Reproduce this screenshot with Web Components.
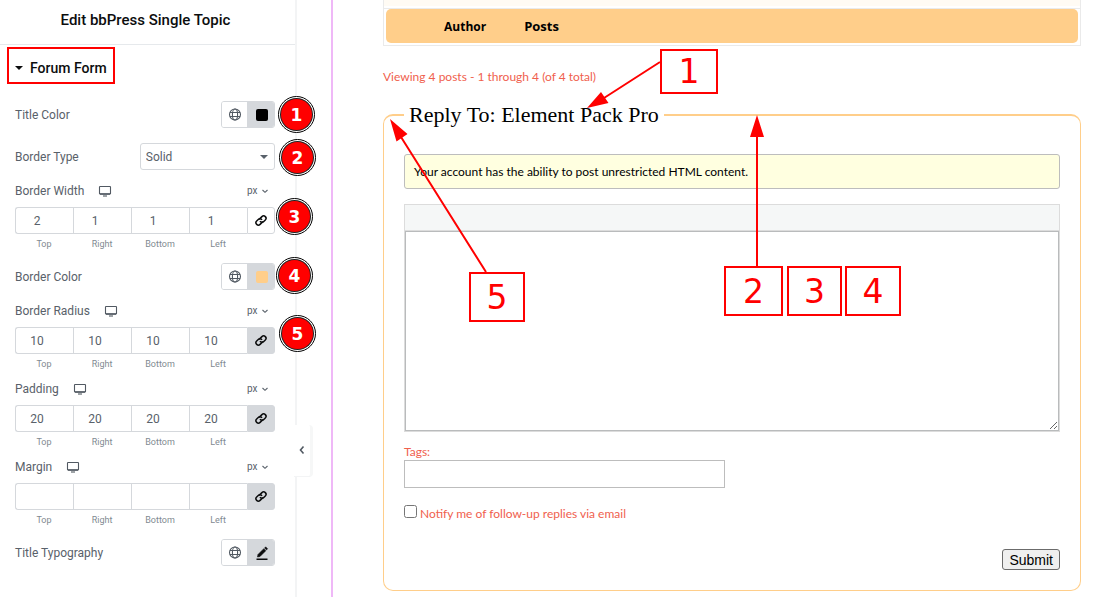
<!DOCTYPE html>
<html lang="en">
<head>
<meta charset="utf-8">
<title>Edit bbPress Single Topic</title>
<style>
  html, body { margin: 0; background: #fff; }
  body { font-family: Roboto, "Liberation Sans", sans-serif; color: #59616a; }
</style>
</head>
<body>
<editor-app></editor-app>
<script>
const define = (name, html, setup) => {
  const template = document.createElement('template');
  template.innerHTML = '<style>*{box-sizing:border-box}:host{display:block}</style>' + html;
  customElements.define(name, class extends HTMLElement {
    constructor() {
      super();
      this.attachShadow({ mode: 'open' }).append(template.content.cloneNode(true));
    }
    connectedCallback() { if (setup) setup(this, this.shadowRoot); }
  });
};

const ICONS = {
  globe: '<circle cx="8" cy="7.500" r="5.5"/><ellipse cx="8" cy="7.500" rx="2.6" ry="5.5"/><path d="M3 5.500h10M3 9.500h10"/>',
  desktop: '<rect x="2.5" y="3.5" width="11" height="7.5" rx="0.6"/><path d="M3 11h10" stroke-width="1.500"/><path d="M6 13h4"/>',
  chevron: '<path d="M5.5 7l2.5 2.3L10.500 7"/>',
  left: '<path d="M9.500 3.500L6.500 7l3 3.500" stroke-width="1.600"/>',
  link: '<g transform="rotate(-45 8 7.500)" stroke-width="1.500"><path d="M8.500 9.600H4.600a2.400 2.400 0 0 1 0-4.800h2.200a2.400 2.400 0 0 1 2.300 3"/><path d="M7.500 5.400h3.900a2.400 2.400 0 0 1 0 4.800H9.200a2.400 2.400 0 0 1-2.300-3"/></g>',
  pencil: '<path d="M4 9.500L9.800 3.700l2 2L6 11.500l-2.500.5z" fill="currentColor" stroke-width=".6"/><path d="M10.500 3l1.200-1.200 2 2L12.500 5z" fill="currentColor" stroke-width=".4"/><path d="M2.500 14.300h11" stroke-width="1.400"/>',
  caret: '<path d="M4 6h8l-4 4z" fill="currentColor" stroke="none"/>'
};

define('ui-icon', `
  <style>:host{display:block;width:16px;height:16px;flex:none} svg{display:block;width:100%;height:100%}</style>
  <svg viewBox="0 0 16 16" fill="none" stroke="currentColor" stroke-width="1.100" aria-hidden="true"></svg>`,
  (el, root) => { root.querySelector('svg').innerHTML = ICONS[el.getAttribute('name')]; });

define('panel-row', `
  <style>
    :host{display:flex;justify-content:space-between;align-items:center;padding:2px 0 1px;font-size:12px}
  </style><span><slot name="label"></slot></span><slot></slot>`);

define('value-buttons', `
  <style>
    :host{display:flex;width:54px;height:27px;border:1px solid #d5d8dc;border-radius:3px;overflow:hidden}
    button{flex:1;border:0;padding:0;margin:0;background:#fff;color:#515962;display:grid;place-items:center}
    .value{background:#d5d8dc;color:#0c0d0e;padding-left:2px}
    ::slotted(i){display:block;width:12px;height:12px;border-radius:2px}
  </style>
  <button aria-label="Global value"><ui-icon name="globe"></ui-icon></button>
  <button class="value" aria-label="Custom value"><slot></slot></button>`);

define('border-type', `
  <style>
    :host{display:flex;justify-content:space-between;align-items:center;padding:2px 0 1px;font-size:12px}
    .box{display:grid;align-items:center;width:52%;height:27px}
    select,ui-icon{grid-area:1/1}
    select{appearance:none;width:100%;height:27px;border:1px solid #d5d8dc;border-radius:3px;background:#fff;
      padding:0 5px;font:12px Roboto,sans-serif;color:inherit}
    ui-icon{justify-self:end;margin-right:3px;pointer-events:none}
  </style>
  <label for="type">Border Type</label>
  <div class="box"><select id="type"><option>Solid</option><option>Dashed</option></select><ui-icon name="caret"></ui-icon></div>`);

define('dimension-control', `
  <style>
    header{display:flex;align-items:center;height:16px;margin-bottom:8px;font-size:12px}
    header button{border:0;padding:0;margin:0 auto 0 13px;background:none;color:#515962}
    .unit{display:grid;align-items:center;width:28px}
    select,.unit ui-icon{grid-area:1/1}
    select{appearance:none;border:0;padding:0;width:28px;background:none;font:10px/16px Roboto,sans-serif;color:inherit}
    .unit ui-icon{justify-self:end;width:18px;margin-right:1px;pointer-events:none}
    .cells{display:grid;grid-template-columns:repeat(4,1fr) 28px}
    input{appearance:textfield;width:100%;min-width:0;height:27px;border:1px solid #d5d8dc;border-right:0;background:#fff;
      padding:0 15px 0 0;text-align:center;font:12px Roboto,sans-serif;color:inherit}
    .cells > :first-child input{border-radius:3px 0 0 3px}
    .cell{display:grid;gap:5px}
    label{font-size:9px;line-height:10px;text-align:center;color:#818a91}
    .link{height:27px;border:1px solid #d5d8dc;border-radius:0 3px 3px 0;background:#d5d8dc;color:#0c0d0e;
      padding:0;display:grid;place-items:center}
    :host([unlinked]) .link{background:#fff}
  </style>
  <header><span class="name"></span><button aria-label="Device"><ui-icon name="desktop"></ui-icon></button>
    <div class="unit"><select aria-label="Unit"><option>px</option><option>em</option></select><ui-icon name="chevron"></ui-icon></div></header>
  <div class="cells">
    <div class="cell"><input id="t"><label for="t">Top</label></div>
    <div class="cell"><input id="r"><label for="r">Right</label></div>
    <div class="cell"><input id="b"><label for="b">Bottom</label></div>
    <div class="cell"><input id="l"><label for="l">Left</label></div>
    <button class="link" aria-label="Link values"><ui-icon name="link"></ui-icon></button>
  </div>`,
  (el, root) => {
    root.querySelector('.name').textContent = el.getAttribute('name');
    const values = (el.getAttribute('values') || '').split(' ');
    root.querySelectorAll('input').forEach((input, i) => { input.value = values[i] || ''; });
  });

define('widget-panel', `
  <style>
    :host{border-right:2px solid #f3f4f5}
    h1{margin:0;padding-right:4px;height:45px;border-bottom:1px solid #e6e9ec;font-size:15px;line-height:40px;font-weight:500;
      text-align:center;color:#0c0d0e}
    .section{display:flex;align-items:center;gap:3px;width:108px;height:37px;margin:2px 0 0 7px;padding:4px 0 0 2px;
      border:2px solid #f00;background:none;font:500 14px Roboto,sans-serif;color:#0c0d0e;white-space:nowrap}
    .controls{display:flex;flex-direction:column;gap:12px;padding:15px 20px 30px 15px}
  </style>
  <h1>Edit bbPress Single Topic</h1>
  <button class="section" aria-expanded="true"><ui-icon name="caret"></ui-icon>Forum Form</button>
  <div class="controls">
    <panel-row><span slot="label">Title Color</span><value-buttons><i style="background:#000"></i></value-buttons></panel-row>
    <border-type></border-type>
    <dimension-control name="Border Width" values="2 1 1 1" unlinked></dimension-control>
    <panel-row><span slot="label">Border Color</span><value-buttons><i style="background:#ffce8a"></i></value-buttons></panel-row>
    <dimension-control name="Border Radius" values="10 10 10 10"></dimension-control>
    <dimension-control name="Padding" values="20 20 20 20"></dimension-control>
    <dimension-control name="Margin"></dimension-control>
    <panel-row><span slot="label">Title Typography</span><value-buttons><ui-icon name="pencil"></ui-icon></value-buttons></panel-row>
  </div>`);

define('panel-handle', `
  <style>
    button{display:grid;place-items:center;width:19px;height:52px;border:0;border-right:3px solid #f6f7f7;border-bottom:1px solid #f3f4f5;
      border-radius:0 4px 4px 0;background:#fff;padding:0;color:#515962}
  </style>
  <button aria-label="Hide panel"><ui-icon name="left"></ui-icon></button>`);

define('topic-header', `
  <style>
    :host{border:1px solid #eaeaea;border-top:0;padding:0}
    .last{height:6px;margin-bottom:2px;background:#fffbf4}
    .frame{border-top:1px solid #eaeaea;padding:0 2px 2px}
    ul{display:flex;gap:38px;align-items:center;margin:0;padding:0 58px;height:34px;list-style:none;border-radius:5px;background:#ffce8a;
      color:#000;font:700 12px "Open Sans",sans-serif}
    li + li{font-size:13px}
  </style>
  <div class="last"></div>
  <div class="frame"><ul><li>Author</li><li>Posts</li></ul></div>`);

define('reply-form', `
  <style>
    :host{font:12px/16px Lato,sans-serif;color:#f0604d}
    fieldset{min-width:0;margin:0;padding:27px 20px 20px;border:1px solid #ffce8a;border-top-width:2px;border-radius:10px}
    legend{padding:0 5px;font:22px/24px "Liberation Serif",serif;color:#000}
    .notice{margin:0 0 15px;padding:9px;border:1px solid #bdbdbd;border-radius:3px;background:#ffffe0;color:#000;line-height:15px}
    .toolbar{height:26px;border:1px solid #dcdcdc;border-bottom:0;background:#f5f7f7}
    .frame{border:1px solid #dcdcdc}
    textarea{display:block;width:100%;height:200px;border:1px solid #b9bbbc;background:#fff;resize:vertical}
    .tags{display:block;margin-top:12px}
    .tags + input{display:block;width:321px;max-width:100%;height:28px;border:1px solid #bdbdbd}
    .notify{display:flex;gap:3px;margin-top:17px}
    .notify input{width:13px;height:13px;margin:0}
    .notify label{padding-top:1px}
    .submit{display:flex;justify-content:flex-end;margin-top:27px}
    .submit button{height:21px;padding:0 6px;border:1px solid #6b6b6b;border-radius:3px;background:#efefef;color:#000;
      font:14px "Liberation Sans",sans-serif}
  </style>
  <fieldset>
    <legend>Reply To: Element Pack Pro</legend>
    <p class="notice">Your account has the ability to post unrestricted HTML content.</p>
    <div class="toolbar"></div>
    <div class="frame"><textarea aria-label="Reply"></textarea></div>
    <label class="tags" for="tags">Tags:</label><input id="tags">
    <div class="notify"><input type="checkbox" id="notify"><label for="notify">Notify me of follow-up replies via email</label></div>
    <div class="submit"><button>Submit</button></div>
  </fieldset>`);

define('step-badge', `
  <style>
    :host{position:absolute;width:37px;height:37px;padding:2px;border:1px solid #000;border-radius:50%;background:#fff}
    span{display:grid;place-items:center;height:100%;border-radius:50%;background:#f00;box-shadow:0 0 0 1px #222;color:#fff;font:700 17px "DejaVu Sans",sans-serif}
  </style><span><slot></slot></span>`);

define('callout-box', `
  <style>
    :host{position:absolute;display:grid;place-items:center;border:2px solid #f00;color:#f00;font:33px/33px "DejaVu Sans",sans-serif}
  </style><slot></slot>`);

/* Guide marks drawn freely over the editor. */
define('guide-marks', `
  <style>
    :host{position:absolute;inset:0;pointer-events:none;overflow:hidden}
    svg{position:absolute;left:0;top:0;width:920px;height:340px}
  </style>
  <svg viewBox="0 0 920 340" stroke="#f00" stroke-width="2" fill="#f00" aria-hidden="true">
    <path d="M660 62L604 98M757 266V136M486 272L401 137"/>
    <path stroke="none" d="M587 108l14-16 7.500 11zM757 115l7 22h-14zM390 119l6.500 22.500 11-7.500z"/>
  </svg>
  <step-badge style="left:278px;top:96px">1</step-badge>
  <step-badge style="left:279px;top:139px">2</step-badge>
  <step-badge style="left:276px;top:198px">3</step-badge>
  <step-badge style="left:276px;top:257px">4</step-badge>
  <step-badge style="left:279px;top:315px">5</step-badge>
  <callout-box style="left:660px;top:49px;width:58px;height:45px">1</callout-box>
  <callout-box style="left:724px;top:266px;width:59px;height:50px">2</callout-box>
  <callout-box style="left:787px;top:266px;width:55px;height:50px">3</callout-box>
  <callout-box style="left:845px;top:266px;width:56px;height:50px">4</callout-box>
  <callout-box style="left:469px;top:272px;width:56px;height:50px">5</callout-box>`);

define('editor-app', `
  <style>
    :host{position:relative;display:grid;grid-template-columns:297px 34px minmax(0,1fr);min-height:100vh}
    .gutter{position:relative}
    panel-handle{position:absolute;left:-3px;top:425px}
    main{border-left:2px solid #efb8f7;padding:0 16px 6px 50px}
    .count{margin:23px 0 18px;font:12px/16px Lato,sans-serif;color:#f0604d}
  </style>
  <widget-panel></widget-panel>
  <div class="gutter"><panel-handle></panel-handle></div>
  <main>
    <topic-header></topic-header>
    <p class="count">Viewing 4 posts - 1 through 4 (of 4 total)</p>
    <reply-form></reply-form>
  </main>
  <guide-marks></guide-marks>`);
</script>
</body>
</html>
